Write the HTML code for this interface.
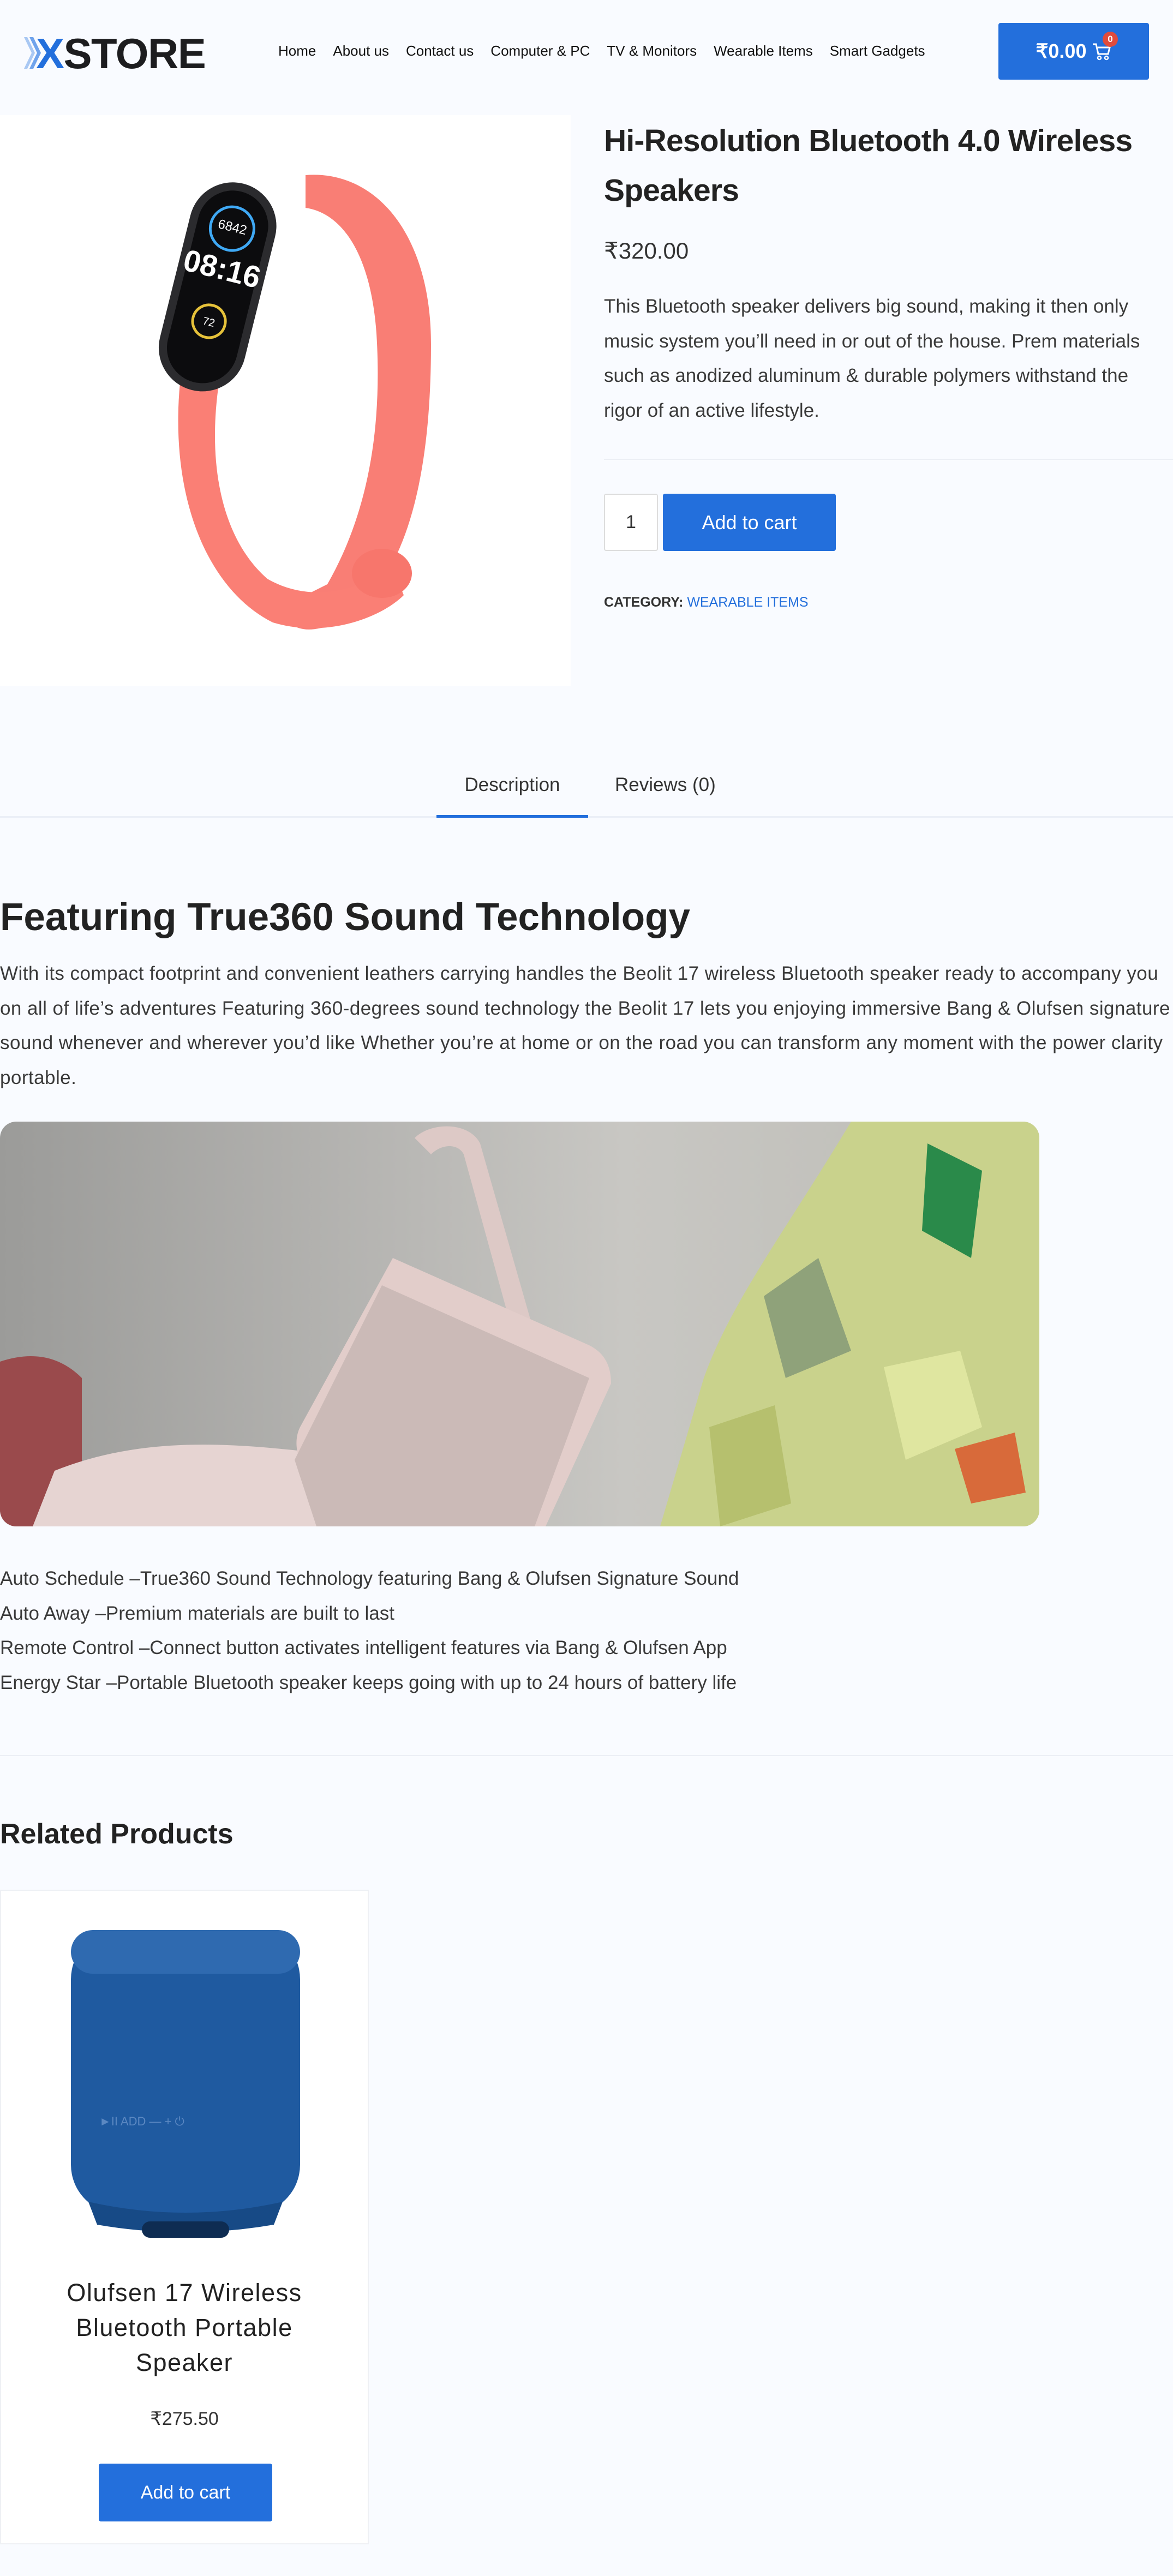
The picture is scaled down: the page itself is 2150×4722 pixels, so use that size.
<!DOCTYPE html>
<html><head><meta charset="utf-8"><style>
*{margin:0;padding:0;box-sizing:border-box}
body{width:2150px;height:4722px;background:#f9fbff;font-family:"Liberation Sans",sans-serif;color:#333;position:relative;overflow:hidden}
.a{position:absolute}
.nav{top:78px;left:510px;font-size:26px;color:#111;white-space:nowrap;word-spacing:0}
.nav span{margin-right:31px}
.btn{background:#236fdc;color:#fff;border-radius:4px;display:flex;align-items:center;justify-content:center}
.p{font-size:35px;line-height:63.5px;color:#3a3a3a}
</style></head><body>
<!-- header -->
<div class="a" style="left:44px;top:66px;width:50px;height:62px">
<svg width="50" height="62" viewBox="0 0 50 62"><path d="M0 2h6l14 29-14 29H0l14-29z" fill="#a9c8f3"/><path d="M10 2h7l14 29-14 29h-7l14-29z" fill="#6fa3ec"/></svg></div>
<div class="a" style="left:66px;top:58px;font-size:78px;font-weight:bold;color:#1d1d1f;letter-spacing:-1.5px;line-height:80px"><span style="color:#236fdc">X</span>STORE</div>
<div class="a nav"><span>Home</span><span>About us</span><span>Contact us</span><span>Computer &amp; PC</span><span>TV &amp; Monitors</span><span>Wearable Items</span><span>Smart Gadgets</span></div>
<div class="a btn" style="left:1830px;top:42px;width:276px;height:104px;font-size:36px;font-weight:bold">₹0.00&nbsp;
<svg width="36" height="34" viewBox="0 0 36 34"><path d="M2 4h6l4 18h18l3-12H11" fill="none" stroke="#fff" stroke-width="3"/><circle cx="14" cy="29" r="3" fill="none" stroke="#fff" stroke-width="2.5"/><circle cx="27" cy="29" r="3" fill="none" stroke="#fff" stroke-width="2.5"/></svg></div>
<div class="a" style="left:2021px;top:58px;width:28px;height:28px;border-radius:50%;background:#e04b3c;color:#fff;font-size:17px;font-weight:bold;text-align:center;line-height:28px">0</div>
<!-- product image -->
<div class="a" style="left:0;top:211px;width:1046px;height:1046px;background:#fff">
<svg width="1046" height="1046" viewBox="0 0 1046 1046">
<path d="M560 110 C690 100 790 220 790 420 C790 620 760 820 650 910 C580 960 520 950 520 900 L600 860 C680 720 700 560 690 400 C680 260 630 180 560 170 Z" fill="#f97e75"/>
<path d="M330 490 C310 700 380 870 500 930 C600 960 700 920 740 880 L720 830 C640 880 560 890 490 850 C410 780 380 650 400 500 Z" fill="#fa7f75"/>
<ellipse cx="700" cy="840" rx="55" ry="45" fill="#f7766c"/>
<g transform="rotate(14 400 310)"><rect x="320" y="120" width="160" height="390" rx="80" fill="#2b2b2e"/><rect x="335" y="135" width="130" height="360" rx="65" fill="#0c0c0e"/>
<text x="400" y="300" fill="#fff" font-size="56" font-weight="bold" text-anchor="middle" font-family="Liberation Sans">08:16</text>
<text x="400" y="210" fill="#fff" font-size="24" text-anchor="middle" font-family="Liberation Sans">6842</text>
<circle cx="400" cy="205" r="40" fill="none" stroke="#3fa9f5" stroke-width="5"/>
<circle cx="400" cy="380" r="30" fill="none" stroke="#e6c23a" stroke-width="5"/>
<text x="400" y="388" fill="#fff" font-size="20" text-anchor="middle" font-family="Liberation Sans">72</text></g>
</svg></div>
<!-- product info -->
<div class="a" style="left:1107px;top:213px;width:1100px;font-size:57px;letter-spacing:-0.8px;font-weight:bold;line-height:91px;color:#222;white-space:nowrap">Hi-Resolution Bluetooth 4.0 Wireless<br>Speakers</div>
<div class="a" style="left:1107px;top:435px;font-size:42px;color:#333">₹320.00</div>
<div class="a p" style="left:1107px;top:530px;width:1030px">This Bluetooth speaker delivers big sound, making it then only music system you’ll need in or out of the house. Prem materials such as anodized aluminum &amp; durable polymers withstand the rigor of an active lifestyle.</div>
<div class="a" style="left:1107px;top:841px;width:1043px;height:2px;background:#eceff5"></div>
<div class="a" style="left:1107px;top:905px;width:99px;height:105px;border:2px solid #ddd;border-radius:4px;background:#fff;font-size:34px;text-align:center;line-height:101px;color:#333">1</div>
<div class="a btn" style="left:1215px;top:905px;width:317px;height:105px;font-size:36px">Add to cart</div>
<div class="a" style="left:1107px;top:1090px;font-size:25px;color:#333"><b style="font-weight:600">CATEGORY:</b> <span style="color:#236fdc">WEARABLE ITEMS</span></div>
<!-- tabs -->
<div class="a" style="left:0;top:1496px;width:2150px;height:3px;background:#ebeff7"></div>
<div class="a" style="left:800px;top:1494px;width:278px;height:5px;background:#236fdc"></div>
<div class="a" style="left:800px;top:1419px;width:278px;text-align:center;font-size:35px;color:#333">Description</div>
<div class="a" style="left:1127px;top:1419px;font-size:35px;color:#333">Reviews (0)</div>
<!-- description -->
<div class="a" style="left:0;top:1641px;font-size:71px;font-weight:bold;color:#222">Featuring True360 Sound Technology</div>
<div class="a p" style="left:0;top:1753px;width:2150px;white-space:nowrap;letter-spacing:0.45px">With its compact footprint and convenient leathers carrying handles the Beolit 17 wireless Bluetooth speaker ready to accompany you<br>on all of life’s adventures Featuring 360-degrees sound technology the Beolit 17 lets you enjoying immersive Bang &amp; Olufsen signature<br>sound whenever and wherever you’d like Whether you’re at home or on the road you can transform any moment with the power clarity<br>portable.</div>
<div class="a" style="left:0;top:2056px;width:1905px;height:742px;border-radius:30px;overflow:hidden;background:linear-gradient(90deg,#9b9b99,#b9b8b5 40%,#c8c7c3 60%,#bdbcb6)">
<svg width="1905" height="742" viewBox="0 0 1905 742">
<path d="M0 440 C60 420 110 430 150 470 L150 742 L0 742Z" fill="#9a4a4c"/>
<path d="M100 640 C300 560 500 600 700 620 L1000 742 L60 742Z" fill="#e6d4d2"/>
<path d="M760 30 C790 0 860 0 880 40 L1000 460 L960 460 L850 60 C840 40 810 40 790 60Z" fill="#ddc9c6"/>
<path d="M720 250 L1080 410 C1110 425 1120 450 1120 480 L1000 742 L620 742 L560 640 C540 610 540 580 550 560Z" fill="#e2cdca"/>
<path d="M700 300 L1080 470 L980 742 L580 742 L540 620Z" fill="#cbbab7"/>
<path d="M1560 0 L1905 0 L1905 742 L1210 742 L1290 470 C1340 330 1440 200 1560 0Z" fill="#c9d28c"/>
<path d="M1700 40 L1800 90 L1780 250 L1690 200Z" fill="#2a8a4a"/>
<path d="M1400 320 L1500 250 L1560 420 L1440 470Z" fill="#8fa27a"/>
<path d="M1620 450 L1760 420 L1800 560 L1660 620Z" fill="#dfe6a0"/>
<path d="M1750 600 L1860 570 L1880 680 L1780 700Z" fill="#d86a3a"/>
<path d="M1300 560 L1420 520 L1450 700 L1320 742Z" fill="#b6c06e"/>
</svg></div>
<div class="a p" style="left:0;top:2862px;width:2150px">Auto Schedule –True360 Sound Technology featuring Bang &amp; Olufsen Signature Sound<br>Auto Away –Premium materials are built to last<br>Remote Control –Connect button activates intelligent features via Bang &amp; Olufsen App<br>Energy Star –Portable Bluetooth speaker keeps going with up to 24 hours of battery life</div>
<div class="a" style="left:0;top:3217px;width:2150px;height:2px;background:#eceff5"></div>
<!-- related -->
<div class="a" style="left:0;top:3332px;font-size:52px;font-weight:bold;color:#222">Related Products</div>
<div class="a" style="left:0;top:3464px;width:676px;height:1200px;background:#fff;border:2px solid #eef0f4">
<svg class="a" style="left:0;top:0" width="672" height="672" viewBox="0 0 672 672">
<rect x="128" y="72" width="420" height="520" rx="90" fill="#1f5aa0"/>
<rect x="128" y="72" width="420" height="80" rx="40" fill="#2f6ab0"/>
<path d="M160 570 Q338 610 516 570 L500 612 Q338 640 176 612Z" fill="#174a86"/>
<rect x="258" y="606" width="160" height="30" rx="15" fill="#0e2c52"/>
<text x="180" y="430" fill="#5b88c2" font-size="22" font-family="Liberation Sans">►II   ADD   —   +    ⏻</text>
</svg>
<div class="a" style="left:0;top:705px;width:672px;text-align:center;font-size:45px;line-height:64px;letter-spacing:1.5px;color:#222">Olufsen 17 Wireless<br>Bluetooth Portable<br>Speaker</div>
<div class="a" style="left:0;top:948px;width:672px;text-align:center;font-size:34px;color:#333">₹275.50</div>
<div class="a btn" style="left:179px;top:1050px;width:318px;height:106px;font-size:34px">Add to cart</div>
</div>
</body></html>
